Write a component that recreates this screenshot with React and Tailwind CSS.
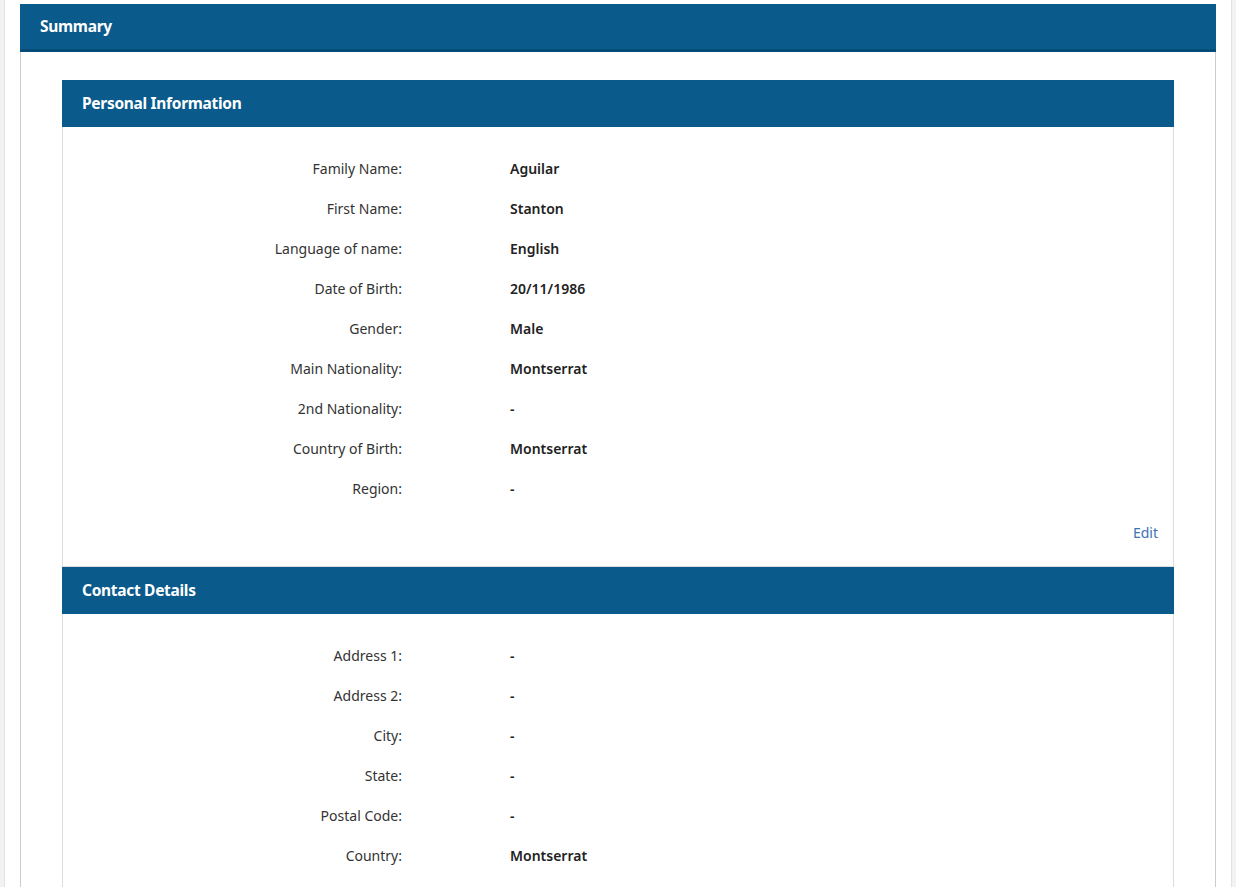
const personal = [
  ['Family Name:', 'Aguilar'],
  ['First Name:', 'Stanton'],
  ['Language of name:', 'English'],
  ['Date of Birth:', '20/11/1986'],
  ['Gender:', 'Male'],
  ['Main Nationality:', 'Montserrat'],
  ['2nd Nationality:', '-'],
  ['Country of Birth:', 'Montserrat'],
  ['Region:', '-'],
];

const contact = [
  ['Address 1:', '-'],
  ['Address 2:', '-'],
  ['City:', '-'],
  ['State:', '-'],
  ['Postal Code:', '-'],
  ['Country:', 'Montserrat'],
];

const Row = ({ label, value }) => (
  <div className="flex h-10 items-center text-[14px]">
    <div className="w-[339px] text-right text-[#333]">{label}</div>
    <div className="ml-[108px] font-semibold text-[#222]">{value}</div>
  </div>
);

const Section = ({ title, rows, edit }) => (
  <div className="border-x border-b border-[#ddd]">
    <div className="-mx-px flex h-[47px] items-center bg-[#0a5a8b] px-5 text-[15.5px] font-bold tracking-[-0.3px] text-white">
      {title}
    </div>
    <div className="pt-[21px] pb-[23px]">
      {rows.map(([l, v]) => (
        <Row key={l} label={l} value={v} />
      ))}
      {edit && (
        <div className="flex h-[35px] justify-end pt-[15px] pr-[15px] text-[14px] leading-5 text-[#3d73b5]">
          <a href="#">Edit</a>
        </div>
      )}
    </div>
  </div>
);

export default function App() {
  return (
    <div className="min-h-screen bg-[#f2f2f2] font-['Noto_Sans',sans-serif]">
      <div className="mx-[4px] min-h-[887px] border-x border-[#e3e3e3] bg-white px-[15px] pt-[4px]">
        <div className="flex h-[48px] items-center border-b-[3px] border-[#064c78] bg-[#0a5a8b] px-5 pt-px text-[15.5px] font-bold tracking-[-0.3px] text-white">
          Summary
        </div>
        <div className="border-x border-[#ccc] px-[41px] pt-[28px] pb-10">
          <Section title="Personal Information" rows={personal} edit />
          <Section title="Contact Details" rows={contact} />
        </div>
      </div>
    </div>
  );
}
